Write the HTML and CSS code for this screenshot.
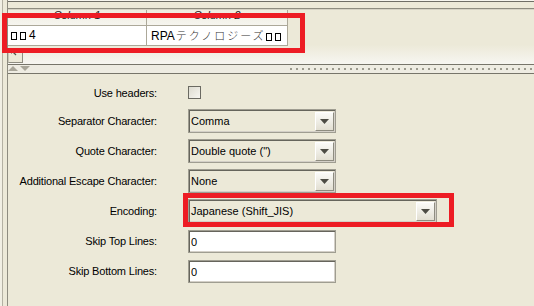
FILE: index.html
```html
<!DOCTYPE html>
<html lang="ja">
<head>
    <meta charset="UTF-8">
    <title>CSV Import Settings</title>
    <link rel="stylesheet" href="styles.css">
</head>
<body>
    <div class="app">
        <div class="edge"></div>
        <div class="rail"></div>
        <div class="main">
            <div class="topstrip"></div>

            <!-- preview grid -->
            <div class="scroll">
                <div class="grid">
                    <div class="grid-head">
                        <div class="cell">Column 1</div>
                        <div class="cell">Column 2</div>
                    </div>
                    <div class="grid-row">
                        <div class="cell"><span class="tofu"></span><span class="tofu"></span>4</div>
                        <div class="cell">RPA<span class="kana">テクノロジーズ</span><span class="tofu"></span><span class="tofu"></span></div>
                    </div>
                </div>
                <div class="corner">
                    <svg width="13" height="13" viewBox="0 0 13 13"><polygon points="2,1 6,1 2,5" fill="#55544c"/><line x1="3" y1="2" x2="7" y2="6" stroke="#55544c" stroke-width="1.2"/></svg>
                </div>
            </div>

            <div class="splitter">
                <div class="arrows">
                    <svg width="22" height="6" viewBox="0 0 22 6"><polygon points="0,5 5,0 10,5" fill="#a9a699"/><polygon points="12,0 22,0 17,5" fill="#a9a699"/></svg>
                </div>
                <div class="grip"></div>
            </div>

            <!-- settings -->
            <div class="panel">
                <div class="form">
                    <label class="lbl">Use headers:</label>
                    <div class="ctl"><span class="check"></span></div>

                    <label class="lbl">Separator Character:</label>
                    <div class="combo"><span class="value">Comma</span><span class="drop"><svg width="9" height="5" viewBox="0 0 9 5"><polygon points="0,0 9,0 4.5,5" fill="#4d4c45"/></svg></span></div>

                    <label class="lbl">Quote Character:</label>
                    <div class="combo"><span class="value">Double quote (")</span><span class="drop"><svg width="9" height="5" viewBox="0 0 9 5"><polygon points="0,0 9,0 4.5,5" fill="#4d4c45"/></svg></span></div>

                    <label class="lbl">Additional Escape Character:</label>
                    <div class="combo"><span class="value">None</span><span class="drop"><svg width="9" height="5" viewBox="0 0 9 5"><polygon points="0,0 9,0 4.5,5" fill="#4d4c45"/></svg></span></div>

                    <label class="lbl">Encoding:</label>
                    <div class="combo wide"><span class="value">Japanese (Shift_JIS)</span><span class="drop"><svg width="9" height="5" viewBox="0 0 9 5"><polygon points="0,0 9,0 4.5,5" fill="#4d4c45"/></svg></span></div>

                    <label class="lbl">Skip Top Lines:</label>
                    <div class="field">0</div>

                    <label class="lbl">Skip Bottom Lines:</label>
                    <div class="field">0</div>
                </div>
            </div>
        </div>
    </div>

    <!-- highlight marks -->
    <div class="mark mark-grid"></div>
    <div class="mark mark-encoding"></div>
</body>
</html>
```

FILE: styles.css
```css
body {
    margin: 0;
    width: 534px;
    height: 306px;
    overflow: hidden;
    position: relative;
    background-color: #ECE9D8;
    color: #000;
    font-family: 'Liberation Sans', Tahoma, sans-serif;
    font-size: 11px;
}
.app {
    display: flex;
    height: 306px;
}
.edge {
    width: 2px;
    background-color: #F1EFE4;
}
.rail {
    width: 4px;
    border-left: 1px solid #B4B1A3;
}
.main {
    flex: 1;
    display: flex;
    flex-direction: column;
    border-left: 1px solid #8E8C80;
    min-width: 0;
}
.topstrip {
    height: 8px;
    background: linear-gradient(#F6F5EE 0 1px, #6F6E66 1px 2px, #ECE9D8 2px);
}
.scroll {
    height: 54px;
    border-top: 1px solid #8E8C80;
    box-shadow: inset 0 1px #D6D3C5;
    padding-top: 1px;
    background: linear-gradient(to bottom, #ECE9D8 65%, #F7F6F1 100%);
}
.grid {
    width: 280px;
}
.grid-head, .grid-row {
    display: grid;
    grid-template-columns: 139px 141px;
}
.grid-head .cell {
    height: 15px;
    border-bottom: 1px solid #ACA899;
    border-right: 1px solid #ACA899;
    background: linear-gradient(#EEECE0, #F6F5EF);
    text-align: center;
    line-height: 11px;
    font-style: italic;
    color: #222;
    overflow: hidden;
}
.grid-row .cell {
    height: 19px;
    line-height: 19px;
    background-color: #FFFFFF;
    border-bottom: 1px solid #ACA899;
    border-right: 1px solid #ACA899;
    padding-left: 3px;
    white-space: nowrap;
    font-size: 12px;
}
.grid-row .cell + .cell {
    padding-left: 4px;
}
.tofu {
    display: inline-block;
    width: 4px;
    height: 6px;
    border: 1px solid #000;
    margin-right: 3px;
    vertical-align: -1px;
}
.kana {
    font-family: 'Noto Sans CJK JP', sans-serif;
    font-weight: 300;
    font-size: 11px;
    letter-spacing: 2px;
    color: #333;
    margin-left: 1px;
}
.corner {
    width: 13px;
    height: 13px;
    margin-top: 2px;
    border: 1px solid;
    border-color: #C9C6B8 #8E8C80 #8E8C80 #C9C6B8;
    background-color: #ECE9D8;
}
.corner svg {
    display: block;
}
.splitter {
    height: 8px;
    display: flex;
    align-items: center;
    border-top: 1px solid #77756A;
    border-bottom: 1px solid #77756A;
    background-color: #EEECE2;
}
.arrows {
    width: 282px;
}
.arrows svg {
    display: block;
}
.grip {
    flex: 1;
    height: 2px;
    background: repeating-linear-gradient(to right, #9C9A8E 0 2px, transparent 2px 6px);
}
.panel {
    flex: 1;
    padding-top: 8px;
}
.form {
    display: grid;
    grid-template-columns: 149px auto;
    grid-template-rows: 21px repeat(6, 24px);
    column-gap: 31px;
    row-gap: 6px;
    align-items: center;
    justify-items: start;
}
.lbl {
    justify-self: end;
    letter-spacing: -0.18px;
}
.check {
    display: block;
    width: 11px;
    height: 11px;
    border: 1px solid #6B6A62;
    background: linear-gradient(135deg, #DDDBD0, #F7F6F1);
}
.combo, .field {
    box-sizing: border-box;
    width: 148px;
    height: 24px;
    border: 1px solid #9F9D91;
    box-shadow: inset 1px 1px #66655C, inset -1px -1px #D4D0C8;
    display: flex;
    align-items: center;
}
.combo.wide {
    width: 249px;
}
.value {
    flex: 1;
    padding-left: 2px;
}
.drop {
    width: 17px;
    height: 17px;
    margin: 1px 1px 0 0;
    border: 1px solid;
    border-color: #FFFFFF #8E8C80 #8E8C80 #FFFFFF;
    background: linear-gradient(#FBFBF8, #E2DFD2);
    display: flex;
    align-items: center;
    justify-content: center;
}
.drop svg {
    display: block;
}
.field {
    height: 23px;
    align-self: end;
    background-color: #FFFFFF;
    padding-left: 2px;
}
.mark {
    position: absolute;
    border: 5px solid #ED1C24;
}
.mark-grid {
    left: 2px;
    top: 13px;
    width: 293px;
    height: 30px;
}
.mark-encoding {
    left: 183px;
    top: 193px;
    width: 261px;
    height: 24px;
}
```
